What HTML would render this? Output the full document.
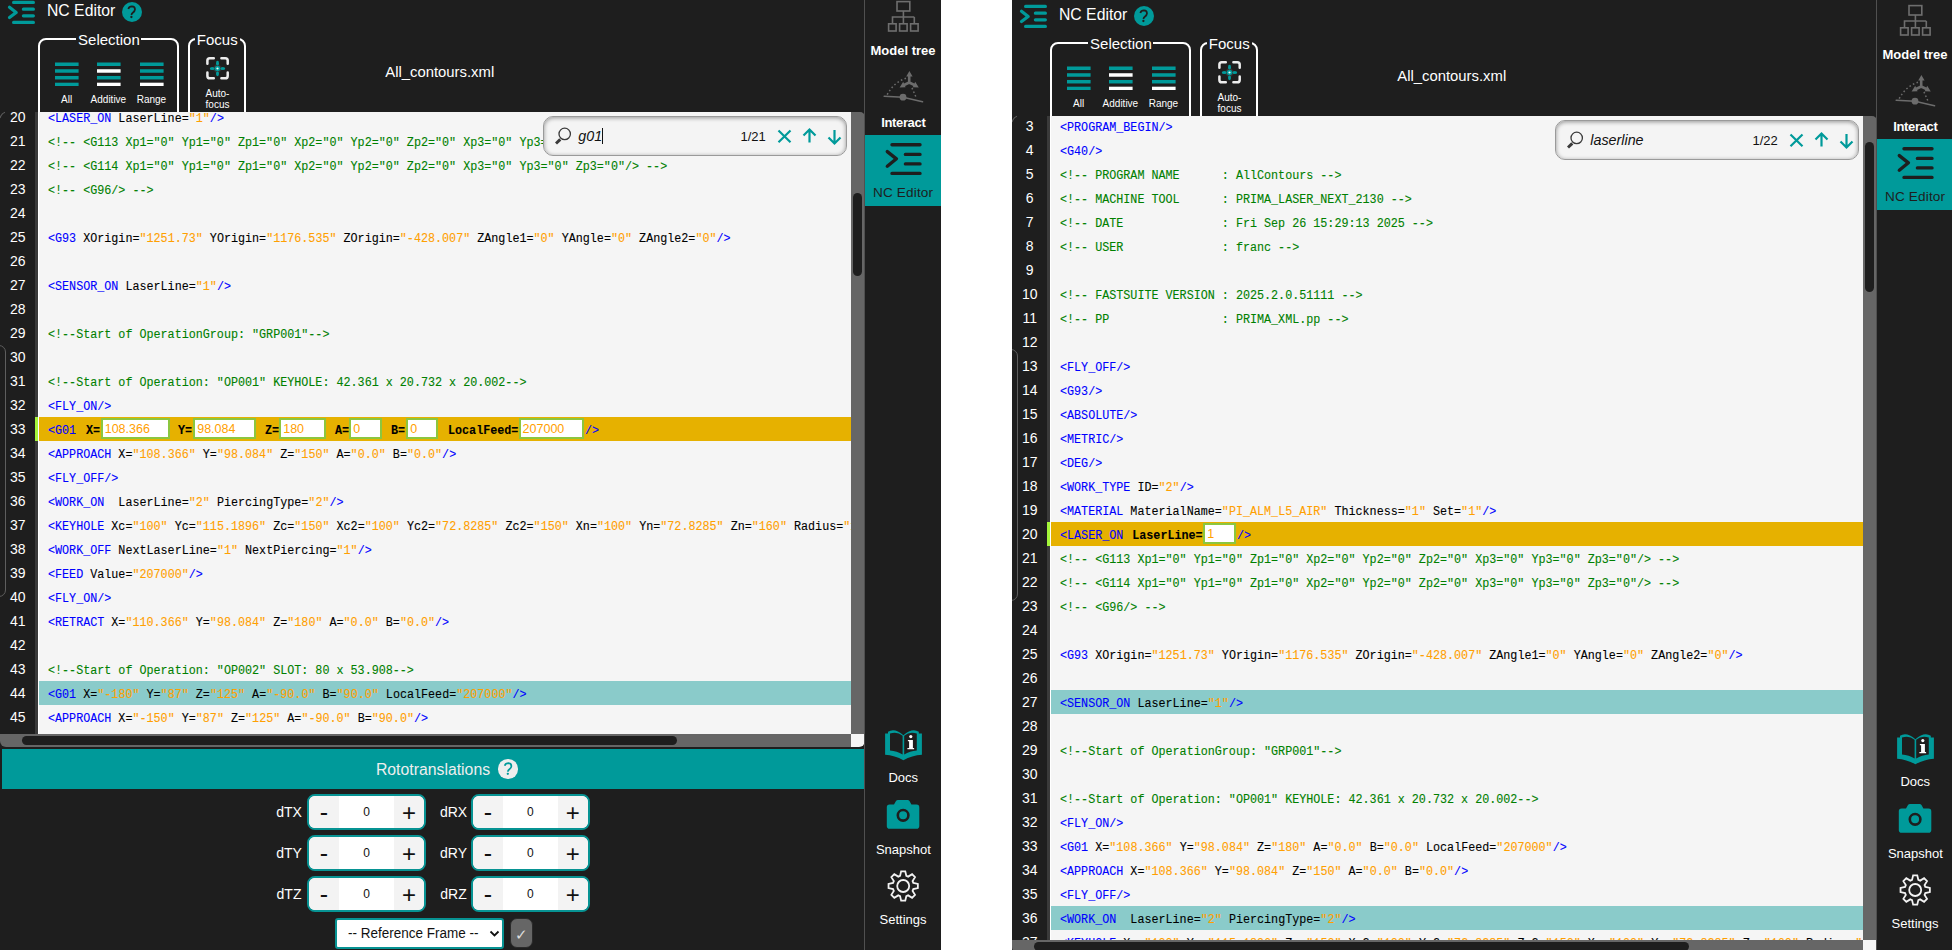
<!DOCTYPE html><html><head><meta charset="utf-8"><style>
*{box-sizing:border-box}
html,body{margin:0;padding:0}
body{width:1952px;height:950px;position:relative;overflow:hidden;background:#fff;font-family:"Liberation Sans", sans-serif}
.panel{position:absolute;overflow:hidden;background:#1e1e1e}
.abs{position:absolute}
.t{position:absolute;line-height:1;white-space:pre}
.fs{border:2px solid #fff;border-radius:8px}
.ln{position:absolute;left:0;width:900px;height:24px}
.code{position:absolute;left:48.3px;top:0;height:24px;line-height:24px;padding-top:2px;font-family:"Liberation Mono", monospace;font-size:12.5px;transform:scaleX(0.938);transform-origin:0 0;-webkit-text-stroke:0.1px currentColor;white-space:pre;color:#000}
.code .g,.g{color:#0000ff}
.code .v{color:#ffa000}
.code .c{color:#008000}
.code .a{color:#000}
.b{font-weight:bold;color:#000}
.inp{position:absolute;top:1.4px;height:21px;border:2.5px solid #8cc63f;background:#fff;color:#ffa000;font-family:"Liberation Sans", sans-serif;font-size:12.5px;line-height:19px;padding-left:2px;white-space:pre}
.num{position:absolute;left:0;width:35.4px;text-align:center;height:24px;line-height:24px;color:#fff;font-size:14px;padding-top:0px}
.search{border:1px solid #9a9a9a;border-radius:10px;background:#f4f4f4;box-shadow:inset 0 1px 4px rgba(0,0,0,.4)}
.spin{width:119px;height:35.5px;border:2.2px solid #079393;border-radius:8px;background:#fff;overflow:hidden}
.sb{position:absolute;top:0;width:30px;height:100%;background:#f3f3f3;color:#111;text-align:center;font-size:24px;line-height:33px}
.sb.l{left:0;line-height:33px;font-size:25px} .sb.r{right:0;line-height:34.5px}
.si{position:absolute;left:30px;right:30px;top:0;height:100%;text-align:center;font-size:12px;line-height:33.6px;color:#111}
.sel{border:2px solid #079393;border-radius:3px;background:#fff}
</style></head><body>
<div class="panel" style="left:0px;top:0;width:941px;height:950px"><div class="abs" style="left:0;top:0px;width:941px;height:950px"><svg class="abs" style="left:0;top:0" width="40" height="26" viewBox="0 0 40 26" fill="none" stroke="#009a9a" stroke-width="3.2" stroke-linecap="round" stroke-linejoin="round">
<path d="M13.6 2.4H33.4M23.4 9.2H33.4M23.4 15.8H33.4M13.6 22.4H33.4"/><path d="M9.5 7.2L16.2 12.4L9.5 17.5"/></svg><div class="t" style="left:47.00px;top:2.67px;font-size:15.75px;color:#fff;">NC Editor</div><div class="abs" style="left:121.6px;top:1.7px;width:20px;height:20px;border-radius:50%;background:#009a9a"></div><svg class="abs" style="left:121px;top:1px" width="22" height="22" viewBox="121 1 22 22" fill="none" stroke="#1e1e1e" stroke-width="1.7"><path d="M128.3 9Q129.1 6.4 131.9 6.4Q135 6.5 135 9.4Q134.9 11.2 132.8 12.7Q131.5 13.6 131.5 14.9"/><circle cx="131.4" cy="17" r="1.15" fill="#1e1e1e" stroke="none"/></svg><div class="abs fs" style="left:38px;top:38px;width:141px;height:120px"></div><div class="abs" style="left:75.6px;top:35px;width:65.4px;height:6px;background:#1e1e1e"></div><div class="t" style="left:-91.10px;width:400px;text-align:center;top:32.00px;font-size:15px;color:#fff;">Selection</div><svg class="abs" style="left:54.6px;top:62px" width="24" height="24" viewBox="0 0 24 24"><rect x="0" y="0.50" width="23.6" height="3.5" fill="#009a9a"/><rect x="0" y="7.23" width="23.6" height="3.5" fill="#009a9a"/><rect x="0" y="13.96" width="23.6" height="3.5" fill="#009a9a"/><rect x="0" y="20.69" width="23.6" height="3.5" fill="#009a9a"/></svg><svg class="abs" style="left:96.5px;top:62px" width="24" height="24" viewBox="0 0 24 24"><rect x="0" y="0.50" width="23.6" height="3.5" fill="#009a9a"/><rect x="0" y="7.23" width="23.6" height="3.5" fill="#fff"/><rect x="0" y="13.96" width="23.6" height="3.5" fill="#009a9a"/><rect x="0" y="20.69" width="23.6" height="3.5" fill="#fff"/></svg><svg class="abs" style="left:139.5px;top:62px" width="24" height="24" viewBox="0 0 24 24"><rect x="0" y="0.50" width="23.6" height="3.5" fill="#009a9a"/><rect x="0" y="7.23" width="23.6" height="3.5" fill="#009a9a"/><rect x="0" y="13.96" width="23.6" height="3.5" fill="#009a9a"/><rect x="0" y="20.69" width="23.6" height="3.5" fill="#fff"/></svg><div class="t" style="left:-133.40px;width:400px;text-align:center;top:94.53px;font-size:10px;color:#fff;">All</div><div class="t" style="left:-91.60px;width:400px;text-align:center;top:94.53px;font-size:10px;color:#fff;">Additive</div><div class="t" style="left:-48.60px;width:400px;text-align:center;top:94.53px;font-size:10px;color:#fff;">Range</div><div class="abs fs" style="left:188px;top:38px;width:58.4px;height:120px"></div><div class="abs" style="left:195px;top:35px;width:44.5px;height:6px;background:#1e1e1e"></div><div class="t" style="left:17.30px;width:400px;text-align:center;top:32.00px;font-size:15px;color:#fff;">Focus</div><svg class="abs" style="left:202px;top:53px" width="32" height="30" viewBox="202 53 32 30" fill="none">
<path d="M207.4 63.8V60.6Q207.4 58.2 209.8 58.2H213.8M221.4 58.2H225.3Q227.7 58.2 227.7 60.6V63.8M227.7 72.6V75.9Q227.7 78.3 225.3 78.3H221.4M213.8 78.3H209.8Q207.4 78.3 207.4 75.9V72.6" stroke="#ececec" stroke-width="2.5" stroke-linecap="round"/>
<path d="M217.5 62.8L223.2 68.5L217.5 74.2L211.8 68.5Z" fill="#333"/>
<g fill="#009a9a"><ellipse cx="217.5" cy="63.2" rx="1.5" ry="2.4"/><ellipse cx="217.5" cy="73.8" rx="1.5" ry="2.4"/><ellipse cx="212.2" cy="68.5" rx="2.4" ry="1.5"/><ellipse cx="222.8" cy="68.5" rx="2.4" ry="1.5"/><circle cx="217.5" cy="68.5" r="2.7"/></g>
<circle cx="217.5" cy="68.5" r="1.1" fill="#e8ffff"/></svg><div class="t" style="left:17.50px;width:400px;text-align:center;top:88.83px;font-size:10px;color:#fff;">Auto-</div><div class="t" style="left:17.50px;width:400px;text-align:center;top:99.53px;font-size:10px;color:#fff;">focus</div><div class="t" style="left:385.30px;top:64.63px;font-size:14.85px;color:#fff;">All_contours.xml</div><div class="abs" style="left:0;top:112px;width:864px;height:635px;overflow:hidden;border-radius:0 6px 6px 6px"></div><div class="abs" style="left:35px;top:112px;width:3px;height:622px;background:#3a3a3a"></div><div class="abs" style="left:38px;top:112px;width:1.3px;height:622px;background:#fff"></div><div class="abs" style="left:39px;top:112px;width:812px;height:622px;overflow:hidden;background:#f5f5f5"><div class="abs" style="left:-39px;top:-112px;width:900px;height:2000px"><div class="ln" style="top:105px;"><div class="code"><span class="g">&lt;LASER_ON</span><span class="a"> LaserLine=</span><span class="v">&quot;1&quot;</span><span class="g">/&gt;</span></div></div><div class="ln" style="top:129px;"><div class="code"><span class="c">&lt;!-- &lt;G113 Xp1=&quot;0&quot; Yp1=&quot;0&quot; Zp1=&quot;0&quot; Xp2=&quot;0&quot; Yp2=&quot;0&quot; Zp2=&quot;0&quot; Xp3=&quot;0&quot; Yp3=&quot;0&quot; Zp3=&quot;0&quot;/&gt; --&gt;</span></div></div><div class="ln" style="top:153px;"><div class="code"><span class="c">&lt;!-- &lt;G114 Xp1=&quot;0&quot; Yp1=&quot;0&quot; Zp1=&quot;0&quot; Xp2=&quot;0&quot; Yp2=&quot;0&quot; Zp2=&quot;0&quot; Xp3=&quot;0&quot; Yp3=&quot;0&quot; Zp3=&quot;0&quot;/&gt; --&gt;</span></div></div><div class="ln" style="top:177px;"><div class="code"><span class="c">&lt;!-- &lt;G96/&gt; --&gt;</span></div></div><div class="ln" style="top:201px;"><div class="code"></div></div><div class="ln" style="top:225px;"><div class="code"><span class="g">&lt;G93</span><span class="a"> XOrigin=</span><span class="v">&quot;1251.73&quot;</span><span class="a"> YOrigin=</span><span class="v">&quot;1176.535&quot;</span><span class="a"> ZOrigin=</span><span class="v">&quot;-428.007&quot;</span><span class="a"> ZAngle1=</span><span class="v">&quot;0&quot;</span><span class="a"> YAngle=</span><span class="v">&quot;0&quot;</span><span class="a"> ZAngle2=</span><span class="v">&quot;0&quot;</span><span class="g">/&gt;</span></div></div><div class="ln" style="top:249px;"><div class="code"></div></div><div class="ln" style="top:273px;"><div class="code"><span class="g">&lt;SENSOR_ON</span><span class="a"> LaserLine=</span><span class="v">&quot;1&quot;</span><span class="g">/&gt;</span></div></div><div class="ln" style="top:297px;"><div class="code"></div></div><div class="ln" style="top:321px;"><div class="code"><span class="c">&lt;!--Start of OperationGroup: &quot;GRP001&quot;--&gt;</span></div></div><div class="ln" style="top:345px;"><div class="code"></div></div><div class="ln" style="top:369px;"><div class="code"><span class="c">&lt;!--Start of Operation: &quot;OP001&quot; KEYHOLE: 42.361 x 20.732 x 20.002--&gt;</span></div></div><div class="ln" style="top:393px;"><div class="code"><span class="g">&lt;FLY_ON</span><span class="g">/&gt;</span></div></div><div class="ln" style="top:417px;background:#e6b100;"><div class="code"><span class="g">&lt;G01</span></div><div class="code b" style="left:85.8px">X=</div><div class="inp" style="left:100.7px;width:69px">108.366</div><div class="code b" style="left:178.3px">Y=</div><div class="inp" style="left:193.2px;width:62.6px">98.084</div><div class="code b" style="left:265.0px">Z=</div><div class="inp" style="left:279.2px;width:46.5px">180</div><div class="code b" style="left:334.7px">A=</div><div class="inp" style="left:349.2px;width:32.4px">0</div><div class="code b" style="left:391.3px">B=</div><div class="inp" style="left:406.2px;width:32.3px">0</div><div class="code b" style="left:447.8px">LocalFeed=</div><div class="inp" style="left:518.6px;width:65.7px">207000</div><div class="code" style="left:585px"><span class="g">/&gt;</span></div></div><div class="ln" style="top:441px;"><div class="code"><span class="g">&lt;APPROACH</span><span class="a"> X=</span><span class="v">&quot;108.366&quot;</span><span class="a"> Y=</span><span class="v">&quot;98.084&quot;</span><span class="a"> Z=</span><span class="v">&quot;150&quot;</span><span class="a"> A=</span><span class="v">&quot;0.0&quot;</span><span class="a"> B=</span><span class="v">&quot;0.0&quot;</span><span class="g">/&gt;</span></div></div><div class="ln" style="top:465px;"><div class="code"><span class="g">&lt;FLY_OFF</span><span class="g">/&gt;</span></div></div><div class="ln" style="top:489px;"><div class="code"><span class="g">&lt;WORK_ON</span><span class="a">  LaserLine=</span><span class="v">&quot;2&quot;</span><span class="a"> PiercingType=</span><span class="v">&quot;2&quot;</span><span class="g">/&gt;</span></div></div><div class="ln" style="top:513px;"><div class="code"><span class="g">&lt;KEYHOLE</span><span class="a"> Xc=</span><span class="v">&quot;100&quot;</span><span class="a"> Yc=</span><span class="v">&quot;115.1896&quot;</span><span class="a"> Zc=</span><span class="v">&quot;150&quot;</span><span class="a"> Xc2=</span><span class="v">&quot;100&quot;</span><span class="a"> Yc2=</span><span class="v">&quot;72.8285&quot;</span><span class="a"> Zc2=</span><span class="v">&quot;150&quot;</span><span class="a"> Xn=</span><span class="v">&quot;100&quot;</span><span class="a"> Yn=</span><span class="v">&quot;72.8285&quot;</span><span class="a"> Zn=</span><span class="v">&quot;160&quot;</span><span class="a"> Radius=</span><span class="v">&quot;12.5&quot;</span><span class="a"> </span><span class="g">/&gt;</span></div></div><div class="ln" style="top:537px;"><div class="code"><span class="g">&lt;WORK_OFF</span><span class="a"> NextLaserLine=</span><span class="v">&quot;1&quot;</span><span class="a"> NextPiercing=</span><span class="v">&quot;1&quot;</span><span class="g">/&gt;</span></div></div><div class="ln" style="top:561px;"><div class="code"><span class="g">&lt;FEED</span><span class="a"> Value=</span><span class="v">&quot;207000&quot;</span><span class="g">/&gt;</span></div></div><div class="ln" style="top:585px;"><div class="code"><span class="g">&lt;FLY_ON</span><span class="g">/&gt;</span></div></div><div class="ln" style="top:609px;"><div class="code"><span class="g">&lt;RETRACT</span><span class="a"> X=</span><span class="v">&quot;110.366&quot;</span><span class="a"> Y=</span><span class="v">&quot;98.084&quot;</span><span class="a"> Z=</span><span class="v">&quot;180&quot;</span><span class="a"> A=</span><span class="v">&quot;0.0&quot;</span><span class="a"> B=</span><span class="v">&quot;0.0&quot;</span><span class="g">/&gt;</span></div></div><div class="ln" style="top:633px;"><div class="code"></div></div><div class="ln" style="top:657px;"><div class="code"><span class="c">&lt;!--Start of Operation: &quot;OP002&quot; SLOT: 80 x 53.908--&gt;</span></div></div><div class="ln" style="top:681px;background:#8acbca;"><div class="code"><span class="g">&lt;G01</span><span class="a"> X=</span><span class="v">&quot;-180&quot;</span><span class="a"> Y=</span><span class="v">&quot;87&quot;</span><span class="a"> Z=</span><span class="v">&quot;125&quot;</span><span class="a"> A=</span><span class="v">&quot;-90.0&quot;</span><span class="a"> B=</span><span class="v">&quot;90.0&quot;</span><span class="a"> LocalFeed=</span><span class="v">&quot;207000&quot;</span><span class="g">/&gt;</span></div></div><div class="ln" style="top:705px;"><div class="code"><span class="g">&lt;APPROACH</span><span class="a"> X=</span><span class="v">&quot;-150&quot;</span><span class="a"> Y=</span><span class="v">&quot;87&quot;</span><span class="a"> Z=</span><span class="v">&quot;125&quot;</span><span class="a"> A=</span><span class="v">&quot;-90.0&quot;</span><span class="a"> B=</span><span class="v">&quot;90.0&quot;</span><span class="g">/&gt;</span></div></div><div class="ln" style="top:729px;"><div class="code"><span class="g">&lt;FLY_OFF</span><span class="g">/&gt;</span></div></div></div></div><div class="abs" style="left:0;top:112px;width:35px;height:622px;overflow:hidden"><div class="abs" style="left:0;top:-112px;width:35px;height:2000px"><div class="num" style="top:105px">20</div><div class="num" style="top:129px">21</div><div class="num" style="top:153px">22</div><div class="num" style="top:177px">23</div><div class="num" style="top:201px">24</div><div class="num" style="top:225px">25</div><div class="num" style="top:249px">26</div><div class="num" style="top:273px">27</div><div class="num" style="top:297px">28</div><div class="num" style="top:321px">29</div><div class="num" style="top:345px">30</div><div class="num" style="top:369px">31</div><div class="num" style="top:393px">32</div><div class="num" style="top:417px">33</div><div class="num" style="top:441px">34</div><div class="num" style="top:465px">35</div><div class="num" style="top:489px">36</div><div class="num" style="top:513px">37</div><div class="num" style="top:537px">38</div><div class="num" style="top:561px">39</div><div class="num" style="top:585px">40</div><div class="num" style="top:609px">41</div><div class="num" style="top:633px">42</div><div class="num" style="top:657px">43</div><div class="num" style="top:681px">44</div><div class="num" style="top:705px">45</div><div class="num" style="top:729px">46</div></div></div><div class="abs" style="left:35px;top:417px;width:3px;height:24px;background:#a4f53a"></div><div class="abs" style="left:-12px;top:345px;width:18px;height:252px;border:1.6px solid #5e5e5e;border-radius:7px"></div><svg class="abs" style="left:0;top:108px" width="8" height="14" viewBox="0 0 8 14" fill="none" stroke="#5a5a5a" stroke-width="1.2"><path d="M0 10Q1.3 5.4 5 4.2"/></svg><div class="abs" style="left:851px;top:112px;width:13.5px;height:622px;background:#666;border-radius:0 5px 0 0"></div><div class="abs" style="left:853.3px;top:193px;width:8.5px;height:82.5px;background:#1e1e1e;border-radius:5px"></div><div class="abs" style="left:0;top:734px;width:851px;height:13px;background:#666;border-radius:0 0 0 6px"></div><div class="abs" style="left:21.5px;top:736px;width:655.5px;height:9px;background:#1e1e1e;border-radius:5px"></div><div class="abs" style="left:851px;top:734px;width:13.5px;height:13px;background:#f5f5f5;border-radius:0 0 6px 0"></div><div class="abs search" style="left:543.2px;top:116px;width:303.4px;height:39.8px"></div><svg class="abs" style="left:552px;top:126px" width="22" height="22" viewBox="0 0 22 22" fill="none">
<circle cx="12.7" cy="7.9" r="5.7" stroke="#3a3a3a" stroke-width="1.3"/><path d="M4 17.5L8.3 13.4" stroke="#3a3a3a" stroke-width="3"/></svg><div class="t" style="left:578.30px;top:129.20px;font-size:14.3px;color:#111;font-style:italic;">g01</div><div class="abs" style="left:602px;top:128px;width:1.2px;height:16px;background:#111"></div><div class="t" style="left:740.50px;top:129.80px;font-size:13px;color:#111;">1/21</div><svg class="abs" style="left:775px;top:127px" width="70" height="20" viewBox="0 0 70 20" fill="none" stroke="#009a9a" stroke-width="2.2">
<path d="M3.5 3.5L15.5 15.2M15.5 3.5L3.5 15.2"/>
<path d="M34.5 2.5V15.5M28.5 8.5L34.5 2.5L40.5 8.5"/>
<path d="M59.5 3V16.5M53.5 10.5L59.5 16.5L65.5 10.5"/></svg><div class="abs" style="left:864px;top:-10px;width:1.1px;height:960px;background:#505050"></div><svg class="abs" style="left:885px;top:0" width="36" height="34" viewBox="885 0 36 34" fill="none" stroke="#6e6e6e" stroke-width="1.6">
<rect x="897" y="1.6" width="12.8" height="9.4"/><path d="M903.4 11V17H892.5V23.8M903.4 17V23.8M914.3 17V23.8M903.4 17H914.3"/>
<rect x="888.6" y="23.8" width="7.5" height="7.2"/><rect x="899.6" y="23.8" width="7.5" height="7.2"/><rect x="910.6" y="23.8" width="7.5" height="7.2"/></svg><div class="t" style="left:703.00px;width:400px;text-align:center;top:43.60px;font-size:13px;color:#fff;font-weight:bold;">Model tree</div><svg class="abs" style="left:880px;top:66px" width="46" height="40" viewBox="880 66 46 40" fill="none" stroke="#6c6c6c">
<path d="M884.2 96.3L903 97.2L922.5 101.8" stroke-width="1.6" stroke-linecap="round"/><circle cx="903" cy="97.2" r="3.4" fill="#6c6c6c" stroke="none"/>
<path d="M887.2 94.6Q894 82 906 78.3" stroke-width="1.5" stroke-dasharray="1.6 2.4"/>
<path d="M912 87.9L916.6 98.5" stroke-width="1.5" stroke-dasharray="1.6 2.3"/>
<path d="M909.2 83V75M909.2 82.5L903 85.5M909.2 82.5L915.4 85.5" stroke-width="2.6"/>
<path d="M909.4 71L912.6 76.6H906.2Z M899.6 87.4L903.2 81.8L905.6 87.2Z M918.8 87.4L915.2 81.8L912.8 87.2Z" fill="#6c6c6c" stroke="none"/></svg><div class="t" style="left:703.30px;width:400px;text-align:center;top:115.90px;font-size:13px;color:#fff;font-weight:bold;letter-spacing:-0.35px;">Interact</div><div class="abs" style="left:865px;top:134.7px;width:76px;height:71px;background:#009a9a"></div><svg class="abs" style="left:880px;top:138px" width="46" height="42" viewBox="880 138 46 42" fill="none" stroke="#1e1e1e" stroke-width="3.4" stroke-linecap="round" stroke-linejoin="round">
<path d="M892 144.7H920M905.4 154.4H920M905.4 163.9H920M892 173.4H920"/><path d="M887.3 151.6L896.4 158.8L887.3 166.2"/></svg><div class="t" style="left:703.10px;width:400px;text-align:center;top:186.29px;font-size:13.6px;color:#1e1e1e;letter-spacing:0.15px;">NC Editor</div><svg class="abs" style="left:880px;top:724px" width="46" height="40" viewBox="880 724 46 40">
<path d="M885.1 733.4H888V731.8Q894.5 727.5 903.4 735.2Q912.3 727.5 918.8 731.8V733.4H921.9V754.8Q912 755.5 903.4 760.3Q894.8 755.5 885.1 754.8Z" fill="#009a9a"/>
<path d="M890 733.6Q897 731 902.6 735.8V754.6Q897 751 890 750.6Z M904.2 735.8Q909.8 731 916.8 733.6V750.6Q909.8 751 904.2 754.6Z" fill="#1e1e1e"/>
<circle cx="910.8" cy="736.6" r="1.6" fill="#fff"/><path d="M907.9 740H912.9V747.9H914.1V749.3H907.4V747.9H909.1V741.3H907.9Z" fill="#fff"/></svg><div class="t" style="left:703.20px;width:400px;text-align:center;top:771.00px;font-size:13px;color:#fff;">Docs</div><svg class="abs" style="left:884px;top:797px" width="38" height="34" viewBox="884 797 38 34">
<path d="M894 804.6L896 801Q896.6 799.9 898 799.9H907.5Q908.9 799.9 909.5 801L911.4 804.6H916.5Q919.3 804.6 919.3 807.4V825.9Q919.3 828.7 916.5 828.7H889.6Q886.8 828.7 886.8 825.9V807.4Q886.8 804.6 889.6 804.6Z" fill="#009a9a"/>
<circle cx="903.1" cy="815.3" r="5.3" fill="none" stroke="#1e1e1e" stroke-width="2.6"/></svg><div class="t" style="left:703.40px;width:400px;text-align:center;top:843.00px;font-size:13px;color:#fff;">Snapshot</div><svg class="abs" style="left:880px;top:864px" width="46" height="46" viewBox="880 864 46 46" fill="none" stroke="#f2f2f2" stroke-width="1.8" stroke-linejoin="miter"><path d="M913.33 882.87 L917.86 883.93 L917.86 888.07 L913.33 889.13 L912.58 890.95 L915.02 894.90 L912.10 897.82 L908.15 895.38 L906.33 896.13 L905.27 900.66 L901.13 900.66 L900.07 896.13 L898.25 895.38 L894.30 897.82 L891.38 894.90 L893.82 890.95 L893.07 889.13 L888.54 888.07 L888.54 883.93 L893.07 882.87 L893.82 881.05 L891.38 877.10 L894.30 874.18 L898.25 876.62 L900.07 875.87 L901.13 871.34 L905.27 871.34 L906.33 875.87 L908.15 876.62 L912.10 874.18 L915.02 877.10 L912.58 881.05Z"/><circle cx="903.2" cy="886" r="6" /></svg><div class="t" style="left:703.10px;width:400px;text-align:center;top:913.20px;font-size:13px;color:#fff;">Settings</div><div class="abs" style="left:2px;top:749px;width:862px;height:40px;background:#009a9a"></div><div class="t" style="left:233.00px;width:400px;text-align:center;top:761.83px;font-size:15.8px;color:#eee;">Rototranslations</div><div class="abs" style="left:498px;top:759px;width:19.5px;height:19.5px;border-radius:50%;background:#eee"></div><svg class="abs" style="left:497px;top:758px" width="22" height="22" viewBox="497 758 22 22" fill="none" stroke="#009a9a" stroke-width="1.7"><path d="M504.7 765.8Q505.5 763.2 508.3 763.2Q511.4 763.3 511.4 766.2Q511.3 768 509.2 769.5Q507.9 770.4 507.9 771.7"/><circle cx="507.8" cy="773.8" r="1.15" fill="#009a9a" stroke="none"/></svg><div class="t" style="left:89.00px;width:400px;text-align:center;top:804.85px;font-size:14px;color:#fff;">dTX</div><div class="abs spin" style="left:307px;top:794px"><div class="sb l">-</div><div class="si">0</div><div class="sb r">+</div></div><div class="t" style="left:253.50px;width:400px;text-align:center;top:804.85px;font-size:14px;color:#fff;">dRX</div><div class="abs spin" style="left:470.8px;top:794px"><div class="sb l">-</div><div class="si">0</div><div class="sb r">+</div></div><div class="t" style="left:89.00px;width:400px;text-align:center;top:845.85px;font-size:14px;color:#fff;">dTY</div><div class="abs spin" style="left:307px;top:835px"><div class="sb l">-</div><div class="si">0</div><div class="sb r">+</div></div><div class="t" style="left:253.50px;width:400px;text-align:center;top:845.85px;font-size:14px;color:#fff;">dRY</div><div class="abs spin" style="left:470.8px;top:835px"><div class="sb l">-</div><div class="si">0</div><div class="sb r">+</div></div><div class="t" style="left:89.00px;width:400px;text-align:center;top:886.85px;font-size:14px;color:#fff;">dTZ</div><div class="abs spin" style="left:307px;top:876px"><div class="sb l">-</div><div class="si">0</div><div class="sb r">+</div></div><div class="t" style="left:253.50px;width:400px;text-align:center;top:886.85px;font-size:14px;color:#fff;">dRZ</div><div class="abs spin" style="left:470.8px;top:876px"><div class="sb l">-</div><div class="si">0</div><div class="sb r">+</div></div><div class="abs sel" style="left:334.5px;top:917.7px;width:169.5px;height:31px"></div><div class="t" style="left:348.00px;top:927.37px;font-size:13.5px;color:#111;transform:scaleY(1.1);transform-origin:0 80%;">-- Reference Frame --</div><svg class="abs" style="left:489px;top:929px" width="12" height="10" viewBox="0 0 12 10" fill="none" stroke="#111" stroke-width="1.8"><path d="M1.5 2.5L5.5 6.5L9.5 2.5"/></svg><div class="abs" style="left:509.5px;top:917.5px;width:23px;height:30.5px;border-radius:7px;background:#666;box-sizing:border-box;border:1.5px solid #2a2a2a"></div><div class="t" style="left:321.20px;width:400px;text-align:center;top:927.30px;font-size:15px;color:#ddd;">✓</div></div></div>
<div class="panel" style="left:1012px;top:0;width:941px;height:950px"><div class="abs" style="left:0;top:4px;width:941px;height:946px"><svg class="abs" style="left:0;top:0" width="40" height="26" viewBox="0 0 40 26" fill="none" stroke="#009a9a" stroke-width="3.2" stroke-linecap="round" stroke-linejoin="round">
<path d="M13.6 2.4H33.4M23.4 9.2H33.4M23.4 15.8H33.4M13.6 22.4H33.4"/><path d="M9.5 7.2L16.2 12.4L9.5 17.5"/></svg><div class="t" style="left:47.00px;top:2.67px;font-size:15.75px;color:#fff;">NC Editor</div><div class="abs" style="left:121.6px;top:1.7px;width:20px;height:20px;border-radius:50%;background:#009a9a"></div><svg class="abs" style="left:121px;top:1px" width="22" height="22" viewBox="121 1 22 22" fill="none" stroke="#1e1e1e" stroke-width="1.7"><path d="M128.3 9Q129.1 6.4 131.9 6.4Q135 6.5 135 9.4Q134.9 11.2 132.8 12.7Q131.5 13.6 131.5 14.9"/><circle cx="131.4" cy="17" r="1.15" fill="#1e1e1e" stroke="none"/></svg><div class="abs fs" style="left:38px;top:38px;width:141px;height:120px"></div><div class="abs" style="left:75.6px;top:35px;width:65.4px;height:6px;background:#1e1e1e"></div><div class="t" style="left:-91.10px;width:400px;text-align:center;top:32.00px;font-size:15px;color:#fff;">Selection</div><svg class="abs" style="left:54.6px;top:62px" width="24" height="24" viewBox="0 0 24 24"><rect x="0" y="0.50" width="23.6" height="3.5" fill="#009a9a"/><rect x="0" y="7.23" width="23.6" height="3.5" fill="#009a9a"/><rect x="0" y="13.96" width="23.6" height="3.5" fill="#009a9a"/><rect x="0" y="20.69" width="23.6" height="3.5" fill="#009a9a"/></svg><svg class="abs" style="left:96.5px;top:62px" width="24" height="24" viewBox="0 0 24 24"><rect x="0" y="0.50" width="23.6" height="3.5" fill="#009a9a"/><rect x="0" y="7.23" width="23.6" height="3.5" fill="#fff"/><rect x="0" y="13.96" width="23.6" height="3.5" fill="#009a9a"/><rect x="0" y="20.69" width="23.6" height="3.5" fill="#fff"/></svg><svg class="abs" style="left:139.5px;top:62px" width="24" height="24" viewBox="0 0 24 24"><rect x="0" y="0.50" width="23.6" height="3.5" fill="#009a9a"/><rect x="0" y="7.23" width="23.6" height="3.5" fill="#009a9a"/><rect x="0" y="13.96" width="23.6" height="3.5" fill="#009a9a"/><rect x="0" y="20.69" width="23.6" height="3.5" fill="#fff"/></svg><div class="t" style="left:-133.40px;width:400px;text-align:center;top:94.53px;font-size:10px;color:#fff;">All</div><div class="t" style="left:-91.60px;width:400px;text-align:center;top:94.53px;font-size:10px;color:#fff;">Additive</div><div class="t" style="left:-48.60px;width:400px;text-align:center;top:94.53px;font-size:10px;color:#fff;">Range</div><div class="abs fs" style="left:188px;top:38px;width:58.4px;height:120px"></div><div class="abs" style="left:195px;top:35px;width:44.5px;height:6px;background:#1e1e1e"></div><div class="t" style="left:17.30px;width:400px;text-align:center;top:32.00px;font-size:15px;color:#fff;">Focus</div><svg class="abs" style="left:202px;top:53px" width="32" height="30" viewBox="202 53 32 30" fill="none">
<path d="M207.4 63.8V60.6Q207.4 58.2 209.8 58.2H213.8M221.4 58.2H225.3Q227.7 58.2 227.7 60.6V63.8M227.7 72.6V75.9Q227.7 78.3 225.3 78.3H221.4M213.8 78.3H209.8Q207.4 78.3 207.4 75.9V72.6" stroke="#ececec" stroke-width="2.5" stroke-linecap="round"/>
<path d="M217.5 62.8L223.2 68.5L217.5 74.2L211.8 68.5Z" fill="#333"/>
<g fill="#009a9a"><ellipse cx="217.5" cy="63.2" rx="1.5" ry="2.4"/><ellipse cx="217.5" cy="73.8" rx="1.5" ry="2.4"/><ellipse cx="212.2" cy="68.5" rx="2.4" ry="1.5"/><ellipse cx="222.8" cy="68.5" rx="2.4" ry="1.5"/><circle cx="217.5" cy="68.5" r="2.7"/></g>
<circle cx="217.5" cy="68.5" r="1.1" fill="#e8ffff"/></svg><div class="t" style="left:17.50px;width:400px;text-align:center;top:88.83px;font-size:10px;color:#fff;">Auto-</div><div class="t" style="left:17.50px;width:400px;text-align:center;top:99.53px;font-size:10px;color:#fff;">focus</div><div class="t" style="left:385.30px;top:64.63px;font-size:14.85px;color:#fff;">All_contours.xml</div><div class="abs" style="left:0;top:112px;width:864px;height:837px;overflow:hidden;border-radius:0 6px 6px 6px"></div><div class="abs" style="left:35px;top:112px;width:3px;height:824px;background:#3a3a3a"></div><div class="abs" style="left:38px;top:112px;width:1.3px;height:824px;background:#fff"></div><div class="abs" style="left:39px;top:112px;width:812px;height:824px;overflow:hidden;background:#f5f5f5"><div class="abs" style="left:-39px;top:-112px;width:900px;height:2000px"><div class="ln" style="top:110px;"><div class="code"><span class="g">&lt;PROGRAM_BEGIN</span><span class="g">/&gt;</span></div></div><div class="ln" style="top:134px;"><div class="code"><span class="g">&lt;G40</span><span class="g">/&gt;</span></div></div><div class="ln" style="top:158px;"><div class="code"><span class="c">&lt;!-- PROGRAM NAME      : AllContours --&gt;</span></div></div><div class="ln" style="top:182px;"><div class="code"><span class="c">&lt;!-- MACHINE TOOL      : PRIMA_LASER_NEXT_2130 --&gt;</span></div></div><div class="ln" style="top:206px;"><div class="code"><span class="c">&lt;!-- DATE              : Fri Sep 26 15:29:13 2025 --&gt;</span></div></div><div class="ln" style="top:230px;"><div class="code"><span class="c">&lt;!-- USER              : franc --&gt;</span></div></div><div class="ln" style="top:254px;"><div class="code"></div></div><div class="ln" style="top:278px;"><div class="code"><span class="c">&lt;!-- FASTSUITE VERSION : 2025.2.0.51111 --&gt;</span></div></div><div class="ln" style="top:302px;"><div class="code"><span class="c">&lt;!-- PP                : PRIMA_XML.pp --&gt;</span></div></div><div class="ln" style="top:326px;"><div class="code"></div></div><div class="ln" style="top:350px;"><div class="code"><span class="g">&lt;FLY_OFF</span><span class="g">/&gt;</span></div></div><div class="ln" style="top:374px;"><div class="code"><span class="g">&lt;G93</span><span class="g">/&gt;</span></div></div><div class="ln" style="top:398px;"><div class="code"><span class="g">&lt;ABSOLUTE</span><span class="g">/&gt;</span></div></div><div class="ln" style="top:422px;"><div class="code"><span class="g">&lt;METRIC</span><span class="g">/&gt;</span></div></div><div class="ln" style="top:446px;"><div class="code"><span class="g">&lt;DEG</span><span class="g">/&gt;</span></div></div><div class="ln" style="top:470px;"><div class="code"><span class="g">&lt;WORK_TYPE</span><span class="a"> ID=</span><span class="v">&quot;2&quot;</span><span class="g">/&gt;</span></div></div><div class="ln" style="top:494px;"><div class="code"><span class="g">&lt;MATERIAL</span><span class="a"> MaterialName=</span><span class="v">&quot;PI_ALM_L5_AIR&quot;</span><span class="a"> Thickness=</span><span class="v">&quot;1&quot;</span><span class="a"> Set=</span><span class="v">&quot;1&quot;</span><span class="g">/&gt;</span></div></div><div class="ln" style="top:518px;background:#e6b100;"><div class="code"><span class="g">&lt;LASER_ON</span> <span class="b" style="margin-left:2px">LaserLine=</span></div><div class="inp" style="left:191.2px;width:32.6px">1</div><div class="code" style="left:224.5px"><span class="g">/&gt;</span></div></div><div class="ln" style="top:542px;"><div class="code"><span class="c">&lt;!-- &lt;G113 Xp1=&quot;0&quot; Yp1=&quot;0&quot; Zp1=&quot;0&quot; Xp2=&quot;0&quot; Yp2=&quot;0&quot; Zp2=&quot;0&quot; Xp3=&quot;0&quot; Yp3=&quot;0&quot; Zp3=&quot;0&quot;/&gt; --&gt;</span></div></div><div class="ln" style="top:566px;"><div class="code"><span class="c">&lt;!-- &lt;G114 Xp1=&quot;0&quot; Yp1=&quot;0&quot; Zp1=&quot;0&quot; Xp2=&quot;0&quot; Yp2=&quot;0&quot; Zp2=&quot;0&quot; Xp3=&quot;0&quot; Yp3=&quot;0&quot; Zp3=&quot;0&quot;/&gt; --&gt;</span></div></div><div class="ln" style="top:590px;"><div class="code"><span class="c">&lt;!-- &lt;G96/&gt; --&gt;</span></div></div><div class="ln" style="top:614px;"><div class="code"></div></div><div class="ln" style="top:638px;"><div class="code"><span class="g">&lt;G93</span><span class="a"> XOrigin=</span><span class="v">&quot;1251.73&quot;</span><span class="a"> YOrigin=</span><span class="v">&quot;1176.535&quot;</span><span class="a"> ZOrigin=</span><span class="v">&quot;-428.007&quot;</span><span class="a"> ZAngle1=</span><span class="v">&quot;0&quot;</span><span class="a"> YAngle=</span><span class="v">&quot;0&quot;</span><span class="a"> ZAngle2=</span><span class="v">&quot;0&quot;</span><span class="g">/&gt;</span></div></div><div class="ln" style="top:662px;"><div class="code"></div></div><div class="ln" style="top:686px;background:#8acbca;"><div class="code"><span class="g">&lt;SENSOR_ON</span><span class="a"> LaserLine=</span><span class="v">&quot;1&quot;</span><span class="g">/&gt;</span></div></div><div class="ln" style="top:710px;"><div class="code"></div></div><div class="ln" style="top:734px;"><div class="code"><span class="c">&lt;!--Start of OperationGroup: &quot;GRP001&quot;--&gt;</span></div></div><div class="ln" style="top:758px;"><div class="code"></div></div><div class="ln" style="top:782px;"><div class="code"><span class="c">&lt;!--Start of Operation: &quot;OP001&quot; KEYHOLE: 42.361 x 20.732 x 20.002--&gt;</span></div></div><div class="ln" style="top:806px;"><div class="code"><span class="g">&lt;FLY_ON</span><span class="g">/&gt;</span></div></div><div class="ln" style="top:830px;"><div class="code"><span class="g">&lt;G01</span><span class="a"> X=</span><span class="v">&quot;108.366&quot;</span><span class="a"> Y=</span><span class="v">&quot;98.084&quot;</span><span class="a"> Z=</span><span class="v">&quot;180&quot;</span><span class="a"> A=</span><span class="v">&quot;0.0&quot;</span><span class="a"> B=</span><span class="v">&quot;0.0&quot;</span><span class="a"> LocalFeed=</span><span class="v">&quot;207000&quot;</span><span class="g">/&gt;</span></div></div><div class="ln" style="top:854px;"><div class="code"><span class="g">&lt;APPROACH</span><span class="a"> X=</span><span class="v">&quot;108.366&quot;</span><span class="a"> Y=</span><span class="v">&quot;98.084&quot;</span><span class="a"> Z=</span><span class="v">&quot;150&quot;</span><span class="a"> A=</span><span class="v">&quot;0.0&quot;</span><span class="a"> B=</span><span class="v">&quot;0.0&quot;</span><span class="g">/&gt;</span></div></div><div class="ln" style="top:878px;"><div class="code"><span class="g">&lt;FLY_OFF</span><span class="g">/&gt;</span></div></div><div class="ln" style="top:902px;background:#8acbca;"><div class="code"><span class="g">&lt;WORK_ON</span><span class="a">  LaserLine=</span><span class="v">&quot;2&quot;</span><span class="a"> PiercingType=</span><span class="v">&quot;2&quot;</span><span class="g">/&gt;</span></div></div><div class="ln" style="top:926px;"><div class="code"><span class="g">&lt;KEYHOLE</span><span class="a"> Xc=</span><span class="v">&quot;100&quot;</span><span class="a"> Yc=</span><span class="v">&quot;115.1896&quot;</span><span class="a"> Zc=</span><span class="v">&quot;150&quot;</span><span class="a"> Xc2=</span><span class="v">&quot;100&quot;</span><span class="a"> Yc2=</span><span class="v">&quot;72.8285&quot;</span><span class="a"> Zc2=</span><span class="v">&quot;150&quot;</span><span class="a"> Xn=</span><span class="v">&quot;100&quot;</span><span class="a"> Yn=</span><span class="v">&quot;72.8285&quot;</span><span class="a"> Zn=</span><span class="v">&quot;160&quot;</span><span class="a"> Radius=</span><span class="v">&quot;12.5&quot;</span><span class="a"> </span><span class="g">/&gt;</span></div></div></div></div><div class="abs" style="left:0;top:112px;width:35px;height:824px;overflow:hidden"><div class="abs" style="left:0;top:-112px;width:35px;height:2000px"><div class="num" style="top:110px">3</div><div class="num" style="top:134px">4</div><div class="num" style="top:158px">5</div><div class="num" style="top:182px">6</div><div class="num" style="top:206px">7</div><div class="num" style="top:230px">8</div><div class="num" style="top:254px">9</div><div class="num" style="top:278px">10</div><div class="num" style="top:302px">11</div><div class="num" style="top:326px">12</div><div class="num" style="top:350px">13</div><div class="num" style="top:374px">14</div><div class="num" style="top:398px">15</div><div class="num" style="top:422px">16</div><div class="num" style="top:446px">17</div><div class="num" style="top:470px">18</div><div class="num" style="top:494px">19</div><div class="num" style="top:518px">20</div><div class="num" style="top:542px">21</div><div class="num" style="top:566px">22</div><div class="num" style="top:590px">23</div><div class="num" style="top:614px">24</div><div class="num" style="top:638px">25</div><div class="num" style="top:662px">26</div><div class="num" style="top:686px">27</div><div class="num" style="top:710px">28</div><div class="num" style="top:734px">29</div><div class="num" style="top:758px">30</div><div class="num" style="top:782px">31</div><div class="num" style="top:806px">32</div><div class="num" style="top:830px">33</div><div class="num" style="top:854px">34</div><div class="num" style="top:878px">35</div><div class="num" style="top:902px">36</div><div class="num" style="top:926px">37</div></div></div><div class="abs" style="left:35px;top:518px;width:3px;height:24px;background:#a4f53a"></div><div class="abs" style="left:-12px;top:345px;width:18px;height:252px;border:1.6px solid #5e5e5e;border-radius:7px"></div><svg class="abs" style="left:0;top:108px" width="8" height="14" viewBox="0 0 8 14" fill="none" stroke="#5a5a5a" stroke-width="1.2"><path d="M0 10Q1.3 5.4 5 4.2"/></svg><div class="abs" style="left:851px;top:112px;width:13.5px;height:824px;background:#666;border-radius:0 5px 0 0"></div><div class="abs" style="left:853.3px;top:137.7px;width:8.5px;height:150.3px;background:#1e1e1e;border-radius:5px"></div><div class="abs" style="left:0;top:936px;width:851px;height:13px;background:#666;border-radius:0 0 0 6px"></div><div class="abs" style="left:21.5px;top:938px;width:655.5px;height:9px;background:#1e1e1e;border-radius:5px"></div><div class="abs" style="left:851px;top:936px;width:13.5px;height:13px;background:#f5f5f5;border-radius:0 0 6px 0"></div><div class="abs search" style="left:543.2px;top:116px;width:303.4px;height:39.8px"></div><svg class="abs" style="left:552px;top:126px" width="22" height="22" viewBox="0 0 22 22" fill="none">
<circle cx="12.7" cy="7.9" r="5.7" stroke="#3a3a3a" stroke-width="1.3"/><path d="M4 17.5L8.3 13.4" stroke="#3a3a3a" stroke-width="3"/></svg><div class="t" style="left:578.30px;top:129.20px;font-size:14.3px;color:#111;font-style:italic;">laserline</div><div class="t" style="left:740.50px;top:129.80px;font-size:13px;color:#111;">1/22</div><svg class="abs" style="left:775px;top:127px" width="70" height="20" viewBox="0 0 70 20" fill="none" stroke="#009a9a" stroke-width="2.2">
<path d="M3.5 3.5L15.5 15.2M15.5 3.5L3.5 15.2"/>
<path d="M34.5 2.5V15.5M28.5 8.5L34.5 2.5L40.5 8.5"/>
<path d="M59.5 3V16.5M53.5 10.5L59.5 16.5L65.5 10.5"/></svg><div class="abs" style="left:864px;top:-10px;width:1.1px;height:956px;background:#505050"></div><svg class="abs" style="left:885px;top:0" width="36" height="34" viewBox="885 0 36 34" fill="none" stroke="#6e6e6e" stroke-width="1.6">
<rect x="897" y="1.6" width="12.8" height="9.4"/><path d="M903.4 11V17H892.5V23.8M903.4 17V23.8M914.3 17V23.8M903.4 17H914.3"/>
<rect x="888.6" y="23.8" width="7.5" height="7.2"/><rect x="899.6" y="23.8" width="7.5" height="7.2"/><rect x="910.6" y="23.8" width="7.5" height="7.2"/></svg><div class="t" style="left:703.00px;width:400px;text-align:center;top:43.60px;font-size:13px;color:#fff;font-weight:bold;">Model tree</div><svg class="abs" style="left:880px;top:66px" width="46" height="40" viewBox="880 66 46 40" fill="none" stroke="#6c6c6c">
<path d="M884.2 96.3L903 97.2L922.5 101.8" stroke-width="1.6" stroke-linecap="round"/><circle cx="903" cy="97.2" r="3.4" fill="#6c6c6c" stroke="none"/>
<path d="M887.2 94.6Q894 82 906 78.3" stroke-width="1.5" stroke-dasharray="1.6 2.4"/>
<path d="M912 87.9L916.6 98.5" stroke-width="1.5" stroke-dasharray="1.6 2.3"/>
<path d="M909.2 83V75M909.2 82.5L903 85.5M909.2 82.5L915.4 85.5" stroke-width="2.6"/>
<path d="M909.4 71L912.6 76.6H906.2Z M899.6 87.4L903.2 81.8L905.6 87.2Z M918.8 87.4L915.2 81.8L912.8 87.2Z" fill="#6c6c6c" stroke="none"/></svg><div class="t" style="left:703.30px;width:400px;text-align:center;top:115.90px;font-size:13px;color:#fff;font-weight:bold;letter-spacing:-0.35px;">Interact</div><div class="abs" style="left:865px;top:134.7px;width:76px;height:71px;background:#009a9a"></div><svg class="abs" style="left:880px;top:138px" width="46" height="42" viewBox="880 138 46 42" fill="none" stroke="#1e1e1e" stroke-width="3.4" stroke-linecap="round" stroke-linejoin="round">
<path d="M892 144.7H920M905.4 154.4H920M905.4 163.9H920M892 173.4H920"/><path d="M887.3 151.6L896.4 158.8L887.3 166.2"/></svg><div class="t" style="left:703.10px;width:400px;text-align:center;top:186.29px;font-size:13.6px;color:#1e1e1e;letter-spacing:0.15px;">NC Editor</div><svg class="abs" style="left:880px;top:724px" width="46" height="40" viewBox="880 724 46 40">
<path d="M885.1 733.4H888V731.8Q894.5 727.5 903.4 735.2Q912.3 727.5 918.8 731.8V733.4H921.9V754.8Q912 755.5 903.4 760.3Q894.8 755.5 885.1 754.8Z" fill="#009a9a"/>
<path d="M890 733.6Q897 731 902.6 735.8V754.6Q897 751 890 750.6Z M904.2 735.8Q909.8 731 916.8 733.6V750.6Q909.8 751 904.2 754.6Z" fill="#1e1e1e"/>
<circle cx="910.8" cy="736.6" r="1.6" fill="#fff"/><path d="M907.9 740H912.9V747.9H914.1V749.3H907.4V747.9H909.1V741.3H907.9Z" fill="#fff"/></svg><div class="t" style="left:703.20px;width:400px;text-align:center;top:771.00px;font-size:13px;color:#fff;">Docs</div><svg class="abs" style="left:884px;top:797px" width="38" height="34" viewBox="884 797 38 34">
<path d="M894 804.6L896 801Q896.6 799.9 898 799.9H907.5Q908.9 799.9 909.5 801L911.4 804.6H916.5Q919.3 804.6 919.3 807.4V825.9Q919.3 828.7 916.5 828.7H889.6Q886.8 828.7 886.8 825.9V807.4Q886.8 804.6 889.6 804.6Z" fill="#009a9a"/>
<circle cx="903.1" cy="815.3" r="5.3" fill="none" stroke="#1e1e1e" stroke-width="2.6"/></svg><div class="t" style="left:703.40px;width:400px;text-align:center;top:843.00px;font-size:13px;color:#fff;">Snapshot</div><svg class="abs" style="left:880px;top:864px" width="46" height="46" viewBox="880 864 46 46" fill="none" stroke="#f2f2f2" stroke-width="1.8" stroke-linejoin="miter"><path d="M913.33 882.87 L917.86 883.93 L917.86 888.07 L913.33 889.13 L912.58 890.95 L915.02 894.90 L912.10 897.82 L908.15 895.38 L906.33 896.13 L905.27 900.66 L901.13 900.66 L900.07 896.13 L898.25 895.38 L894.30 897.82 L891.38 894.90 L893.82 890.95 L893.07 889.13 L888.54 888.07 L888.54 883.93 L893.07 882.87 L893.82 881.05 L891.38 877.10 L894.30 874.18 L898.25 876.62 L900.07 875.87 L901.13 871.34 L905.27 871.34 L906.33 875.87 L908.15 876.62 L912.10 874.18 L915.02 877.10 L912.58 881.05Z"/><circle cx="903.2" cy="886" r="6" /></svg><div class="t" style="left:703.10px;width:400px;text-align:center;top:913.20px;font-size:13px;color:#fff;">Settings</div></div></div>
</body></html>
